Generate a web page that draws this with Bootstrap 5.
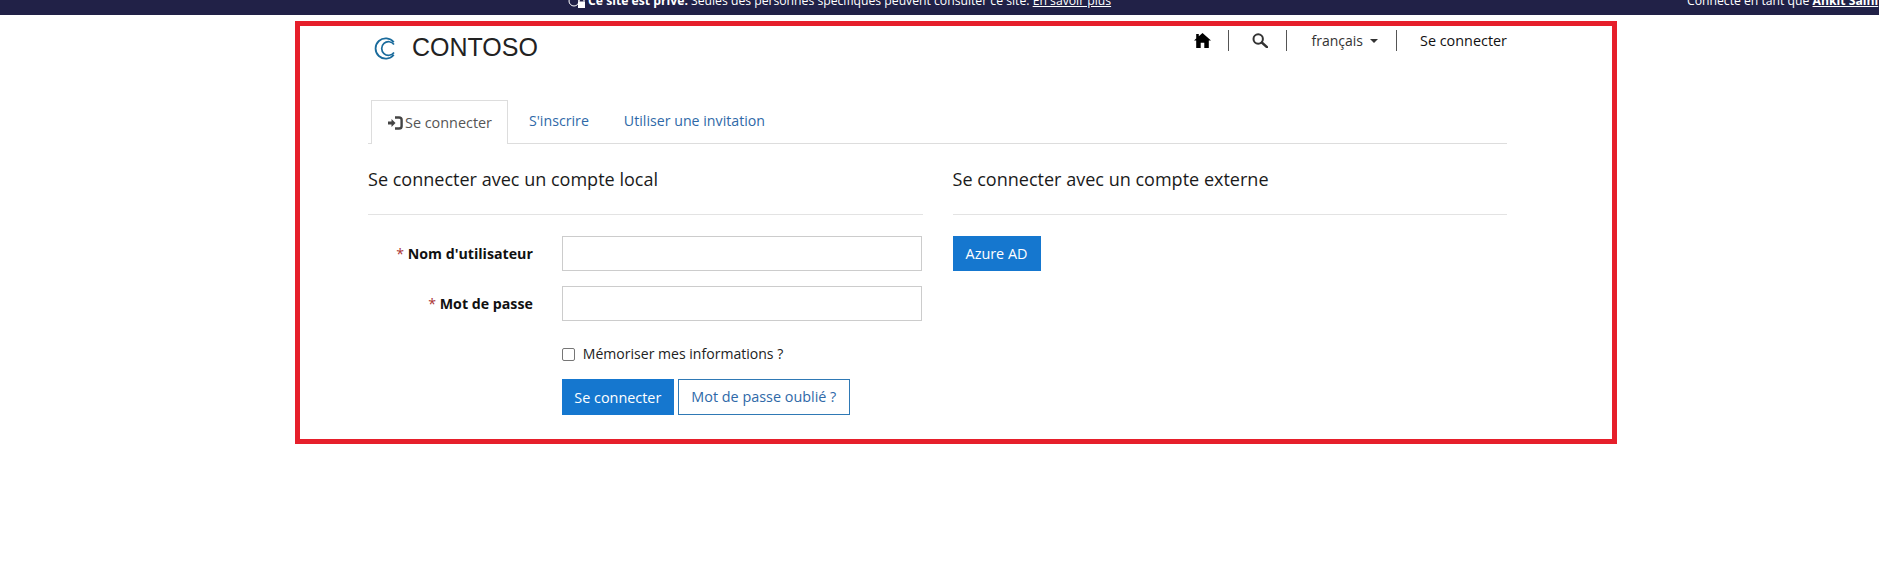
<!DOCTYPE html>
<html lang="fr">
<head>
<meta charset="utf-8">
<title>Contoso</title>
<link rel="stylesheet" href="https://cdn.jsdelivr.net/npm/bootstrap@5.3.0/dist/css/bootstrap.min.css">
<style>
html,body{background:#fff;}
body{font-family:"Open Sans","Liberation Sans",sans-serif;font-size:14.4px;color:#111;overflow:hidden;}
.site-bar{height:15px;background:#212147;color:#fff;overflow:hidden;padding-left:568px;font-size:12.2px;line-height:20px;white-space:nowrap;}
.site-bar-inner{margin-top:-9px;}
.site-bar a{color:#fff;}
.bar-lock{width:20px;height:20px;flex:none;margin-top:-3px;}
.bar-user{margin-left:auto;flex:none;width:192px;overflow:hidden;}
.frame{width:1322px;height:423px;margin:6px 0 0 295px;border:5px solid #e61f2b;padding:0 105px 0 68px;}
.top-line{height:74px;}
.brand-mark{width:23px;height:23px;margin-left:6px;margin-top:11px;flex:none;}
.brand-name{font-family:"Liberation Sans",Arial,sans-serif;font-size:25px;line-height:28px;color:#222;margin-left:15px;margin-top:7px;}
.right-nav{margin-top:4px;height:21px;font-size:14.4px;line-height:21px;}
.right-nav .nav-cell{display:flex;align-items:center;height:21px;color:#111;text-decoration:none;}
.right-nav .cell-sep{border-left:1px solid #555;}
.cell-home{padding-right:17px;}
.cell-search{padding:0 18px 0 23px;}
.cell-lang{padding:0 18px 0 25px;font-size:14px;color:#333!important;}
.cell-login{padding-left:23px;font-weight:500;}
.lang-caret{width:0;height:0;border-left:4px solid transparent;border-right:4px solid transparent;border-top:4px solid #333;margin-left:7px;}
.tabs-line{border-bottom:1px solid #ddd;height:44px;padding-left:3px;font-size:14.2px;}
.tabs-line .nav-link{border:1px solid transparent;border-bottom:0;border-radius:0;height:44px;padding:0 16px;margin:0;color:#2f69a8;line-height:40px;}
.tabs-line .nav-item:last-child .nav-link{margin-left:1px;}
.tabs-line .nav-link.active{border-color:#ddd;background:#fff;color:#555;height:44px;line-height:44px;margin-right:4px;padding-right:15px;font-size:14.4px;}
.tab-icon{width:15px;height:14px;vertical-align:-2px;margin-right:2px;}
.form-cols{--bs-gutter-x:30px;}
.pane-title{font-size:18.05px;font-weight:400;line-height:26px;margin:22px 0 0;color:#1a1a1a;height:48px;}
.pane-rule{margin:0 0 21px;border:0;border-top:1px solid #e3e3e3;opacity:1;}
.field-row{--bs-gutter-x:30px;margin-bottom:15px;}
.field-label{font-weight:700;font-size:14.2px;line-height:35px;text-align:right;color:#111;}
.req{color:#a33;font-weight:400;}
.field-box{padding-left:14px;}
.field-input{height:35px;border:1px solid #ccc;border-radius:0;box-shadow:none;}
.remember{margin-top:11px;height:14px;}
.remember .form-check-input{width:13px;height:13px;margin:0;border:1px solid #767676;border-radius:2px;flex:none;}
.remember label{margin-left:8px;font-size:14.05px;line-height:14px;color:#222;}
.actions{margin-top:18px;}
.btn-main{height:36px;padding:0;background:#1577cf;border:1px solid #1577cf;color:#fff;border-radius:0;font-size:14.4px;line-height:33px;}
.btn-login{width:112px;}
.btn-forgot{width:172px;margin-left:4px;height:36px;padding:0;background:#fff;border:1px solid #2f79b5;color:#2f69a8;border-radius:0;font-size:14.4px;line-height:33px;}
.btn-azure{width:88px;height:35px;line-height:32px;}
</style>
</head>
<body>
<div class="site-bar">
  <div class="site-bar-inner d-flex align-items-start">
    <svg class="bar-lock" viewBox="0 0 20 20" aria-hidden="true"><circle cx="6" cy="13" r="5" fill="none" stroke="#fff" stroke-width="1"/><path d="M11 13.500v-1.500a2.500 2.500 0 0 1 5 0v1.500" fill="none" stroke="#fff" stroke-width="1.200"/><rect x="10" y="13.500" width="7" height="6.500" fill="#fff"/></svg>
    <span><strong>Ce site est privé.</strong> Seules des personnes spécifiques peuvent consulter ce site. <a href="#">En savoir plus</a></span>
    <span class="bar-user">Connecté en tant que <a href="#" class="fw-bold">Ankit Saini</a></span>
  </div>
</div>
<div class="frame">
  <div class="top-line d-flex justify-content-between align-items-start">
    <div class="d-flex align-items-start">
      <svg class="brand-mark" viewBox="0 0 23 23" aria-hidden="true">
        <path d="M19.800 5.200A10.200 10.200 0 1 0 19.800 17.800" fill="none" stroke="#1a6b9c" stroke-width="1.800"/>
        <path d="M20 7.500A6.800 6.800 0 1 0 20 15.500" fill="none" stroke="#1a6b9c" stroke-width="1.700"/>
      </svg>
      <span class="brand-name">CONTOSO</span>
    </div>
    <nav class="right-nav d-flex align-items-center" aria-label="Navigation">
      <a class="nav-cell cell-home" href="#" aria-label="Accueil">
        <svg width="17" height="15" viewBox="0 0 17 15" aria-hidden="true"><path d="M8.500 0L17 7.600H14.800V15H10.300V9.700H6.700V15H2.200V7.600H0L2.200 5.600V1H4.800V3.300Z" fill="#000"/></svg>
      </a>
      <a class="nav-cell cell-search cell-sep" href="#" aria-label="Rechercher">
        <svg width="16" height="15" viewBox="0 0 16 15" aria-hidden="true"><circle cx="6.200" cy="6" r="4.700" fill="none" stroke="#333" stroke-width="2"/><path d="M9.800 9.500L15 14.200" stroke="#333" stroke-width="2.400" stroke-linecap="round"/></svg>
      </a>
      <a class="nav-cell cell-lang cell-sep" href="#">français<span class="lang-caret"></span></a>
      <a class="nav-cell cell-login cell-sep" href="#">Se connecter</a>
    </nav>
  </div>
  <ul class="nav tabs-line">
    <li class="nav-item"><a class="nav-link active" href="#"><svg class="tab-icon" viewBox="0 0 15 14" aria-hidden="true"><path d="M0 5.500H3.500V3L7.500 7L3.500 11V8.500H0Z" fill="#444"/><path d="M7 1.500H11Q13.600 1.500 13.600 3.800V10.200Q13.600 12.500 11 12.500H7" fill="none" stroke="#444" stroke-width="2.400"/></svg>Se connecter</a></li>
    <li class="nav-item"><a class="nav-link" href="#">S'inscrire</a></li>
    <li class="nav-item"><a class="nav-link" href="#">Utiliser une invitation</a></li>
  </ul>
  <div class="row form-cols">
    <div class="col-6">
      <h2 class="pane-title">Se connecter avec un compte local</h2>
      <hr class="pane-rule">
      <form>
        <div class="row field-row">
          <label class="col-4 field-label" for="uname"><span class="req">*</span> Nom d'utilisateur</label>
          <div class="col-8 field-box"><input id="uname" class="form-control field-input" type="text"></div>
        </div>
        <div class="row field-row">
          <label class="col-4 field-label" for="pwd"><span class="req">*</span> Mot de passe</label>
          <div class="col-8 field-box"><input id="pwd" class="form-control field-input" type="password"></div>
        </div>
        <div class="row field-row mb-0">
          <div class="col-8 offset-4 field-box">
            <div class="remember d-flex align-items-center">
              <input id="rem" class="form-check-input" type="checkbox">
              <label for="rem">Mémoriser mes informations ?</label>
            </div>
            <div class="actions d-flex">
              <button type="button" class="btn btn-main btn-login">Se connecter</button>
              <a href="#" class="btn btn-forgot">Mot de passe oublié ?</a>
            </div>
          </div>
        </div>
      </form>
    </div>
    <div class="col-6">
      <h2 class="pane-title">Se connecter avec un compte externe</h2>
      <hr class="pane-rule">
      <button type="button" class="btn btn-main btn-azure">Azure AD</button>
    </div>
  </div>
</div>
<script src="https://cdn.jsdelivr.net/npm/bootstrap@5.3.0/dist/js/bootstrap.bundle.min.js"></script>
</body>
</html>
